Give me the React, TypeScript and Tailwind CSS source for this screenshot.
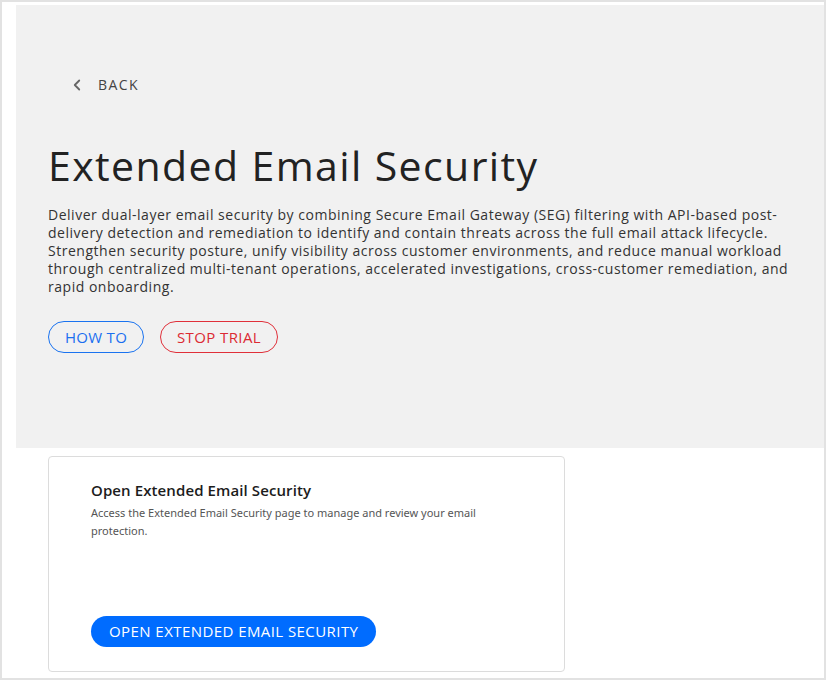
import { ChevronLeft } from "lucide-react";

export default function App() {
  return (
    <div className="w-[826px] h-[680px] overflow-hidden border-2 border-[#e2e2e2] bg-white pl-[14px] pt-[3px] font-['Open_Sans',sans-serif]">
      {/* Header panel */}
      <section className="h-[443px] w-[808px] bg-[#f1f1f1] px-8 pt-[69px]">
        <a href="#" className="flex items-center gap-[12px] pl-[20px] text-[14px] tracking-[1.4px] text-[#444]">
          <ChevronLeft size={18} strokeWidth={2.4} className="text-[#666]" />
          <span>BACK</span>
        </a>

        <h1 className="mt-[46px] text-[41px] leading-[48px] font-normal tracking-[1.4px] text-[#222]">
          Extended Email Security
        </h1>

        <p className="mt-[17px] w-[746px] text-[14px] leading-[18px] tracking-[0.52px] text-[#333]">
          Deliver dual-layer email security by combining Secure Email Gateway (SEG) filtering with API-based post-delivery
          detection and remediation to identify and contain threats across the full email attack lifecycle. Strengthen
          security posture, unify visibility across customer environments, and reduce manual workload through centralized
          multi-tenant operations, accelerated investigations, cross-customer remediation, and rapid onboarding.
        </p>

        <div className="mt-[25px] flex gap-4">
          <button className="h-[32px] w-[96px] rounded-full border border-[#1a73f0] text-[15px] tracking-[0.3px] text-[#1a6ff0]">
            HOW TO
          </button>
          <button className="h-[32px] w-[118px] rounded-full border border-[#e0303a] text-[15px] tracking-[0.4px] text-[#dc2a33]">
            STOP TRIAL
          </button>
        </div>
      </section>

      {/* Card */}
      <div className="ml-8 mt-2 flex h-[216px] w-[517px] flex-col rounded border border-[#dcdcdc] px-[42px] pt-[23px] pb-[24px]">
        <h2 className="text-[15px] font-semibold leading-[20px] tracking-[0.1px] text-[#1c1c1c]">Open Extended Email Security</h2>
        <p className="mt-[4px] w-[410px] font-['Noto_Sans',sans-serif] text-[11px] leading-[18px] text-[#555]">
          Access the Extended Email Security page to manage and review your email protection.
        </p>
        <div className="mt-auto">
          <button className="h-[31px] rounded-full bg-[#006cff] px-[18px] text-[15px] tracking-[0.43px] text-white">
            OPEN EXTENDED EMAIL SECURITY
          </button>
        </div>
      </div>
    </div>
  );
}
